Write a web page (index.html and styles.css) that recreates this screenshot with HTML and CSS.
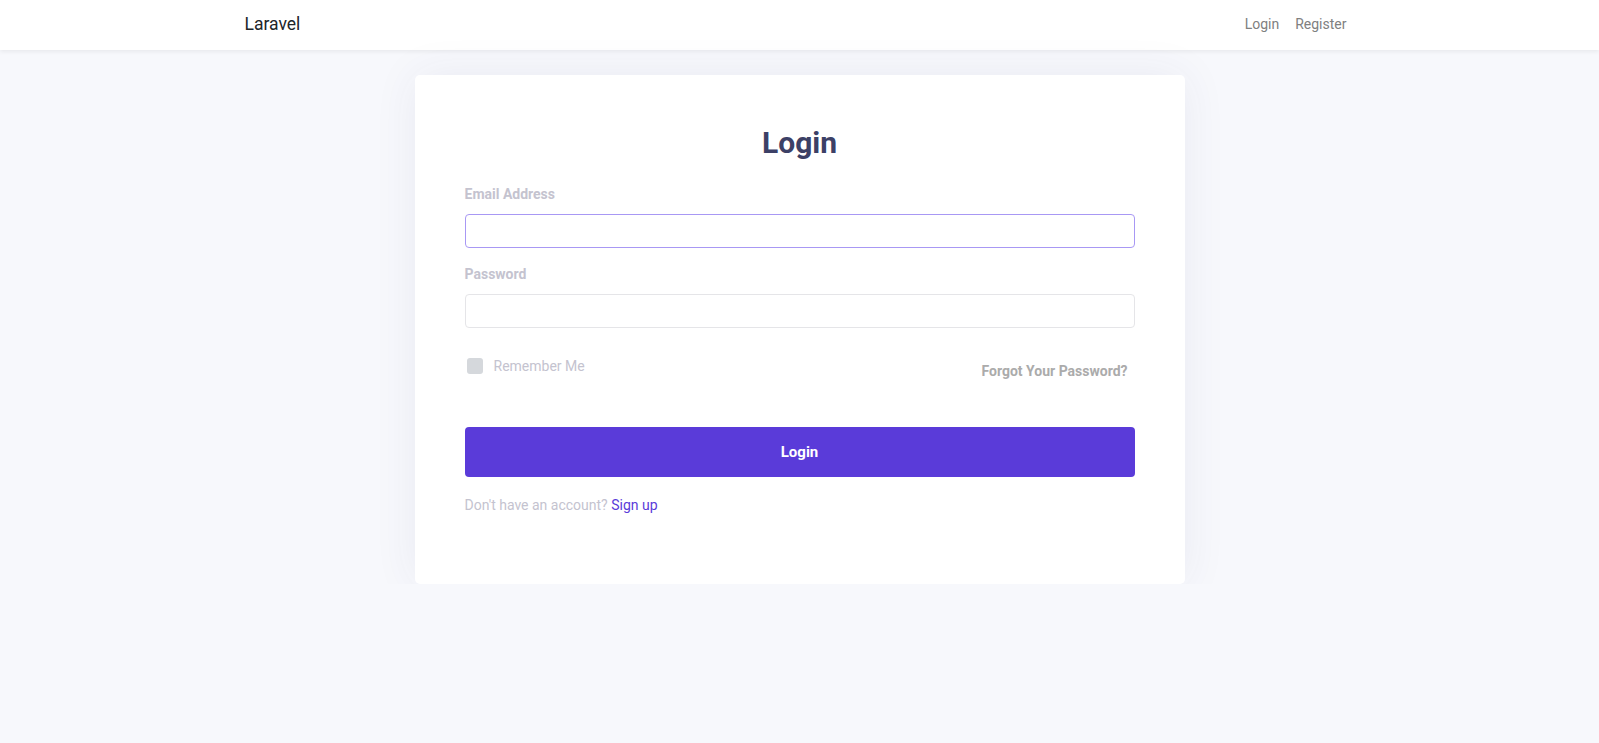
FILE: index.html
```html
<!DOCTYPE html>
<html lang="en">
<head>
    <meta charset="UTF-8">
    <meta name="viewport" content="width=device-width, initial-scale=1.0">
    <title>Laravel</title>
    <link rel="stylesheet" href="styles.css">
</head>
<body>
    <nav class="navbar">
        <div class="container">
            <a class="brand" href="#">Laravel</a>
            <ul class="nav-links">
                <li><a href="#">Login</a></li>
                <li><a href="#">Register</a></li>
            </ul>
        </div>
    </nav>

    <main class="page">
        <div class="card">
            <h1 class="card-title">Login</h1>
            <form class="login-form">
                <div class="field">
                    <label for="email">Email Address</label>
                    <input id="email" type="email" class="input input-focus">
                </div>
                <div class="field">
                    <label for="password">Password</label>
                    <input id="password" type="password" class="input">
                </div>
                <div class="form-row">
                    <label class="remember">
                        <span class="checkbox"></span>
                        Remember Me
                    </label>
                    <a class="forgot" href="#">Forgot Your Password?</a>
                </div>
                <button type="button" class="btn-login">Login</button>
                <p class="signup">Don't have an account? <a href="#">Sign up</a></p>
            </form>
        </div>
    </main>
</body>
</html>
```

FILE: styles.css
```css
* { box-sizing: border-box; }
body { margin: 0; font-family: Roboto, "Liberation Sans", sans-serif; font-size: 14px; line-height: 1.5; background-color: #f7f8fc; color: #212529; }
a { text-decoration: none; }

.navbar { height: 50px; background-color: #fff; box-shadow: 0 2px 4px rgba(0, 0, 0, 0.06); }
.container { max-width: 1140px; margin: 0 auto; padding: 0 15px 2px; height: 100%; display: flex; align-items: center; justify-content: space-between; }
.brand { font-size: 17.5px; color: #212529; }
.nav-links { display: flex; list-style: none; margin: 0; padding: 0; }
.nav-links a { display: block; padding: 8px; color: #808080; }

.page { padding-top: 25px; }
.card { width: 770px; margin: 0 auto; padding: 50px 50px 50px; background-color: #fff; border-radius: 5px; box-shadow: 0 0 45px rgba(50, 50, 110, 0.07); }
.card-title { margin: 0 0 23px; font-size: 30px; line-height: 36px; font-weight: 700; text-align: center; color: #3c4066; }

.field { margin-bottom: 16px; }
.field label { display: block; margin-bottom: 9px; font-weight: 700; color: #c4c3cf; }
.input { display: block; width: 100%; height: 34px; padding: 6px 12px; border: 1px solid #e5e5e8; border-radius: 4px; font: inherit; outline: none; }
.input-focus { border-color: #a898f4; }

.form-row { display: flex; justify-content: space-between; align-items: flex-start; margin-top: 30px; }
.remember { display: flex; align-items: center; gap: 11px; line-height: 16px; color: #c4c3cf; }
.checkbox { width: 16px; height: 16px; margin-left: 2px; border-radius: 3px; background-color: #d5d8dc; }
.forgot { padding: 5px 7px 0 0; font-weight: 700; line-height: 16px; color: #ababab; }

.btn-login { display: block; width: 100%; height: 50px; margin-top: 48px; border: none; border-radius: 4px; background-color: #5a3bd9; color: #fff; font: inherit; font-size: 15px; font-weight: 700; cursor: pointer; }

.signup { margin: 18px 0 18px; color: #c4c3cf; }
.signup a { color: #5a3bd9; }
```
